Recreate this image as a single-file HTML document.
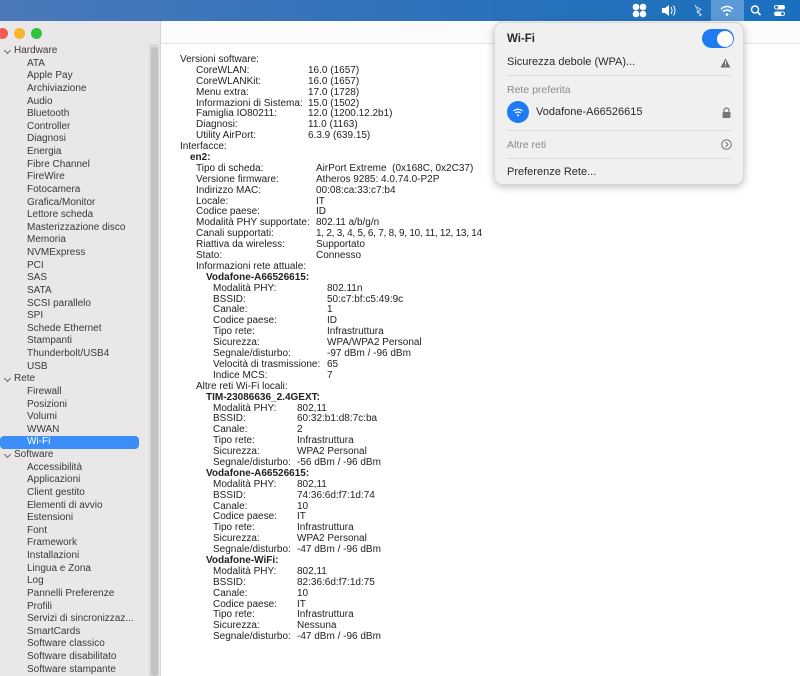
<!DOCTYPE html>
<html><head><meta charset="utf-8"><style>
*{margin:0;padding:0;box-sizing:border-box}
body{width:800px;height:676px;overflow:hidden;position:relative;font-family:"Liberation Sans",sans-serif;background:#fff;color:#222}
#bar{position:absolute;left:0;top:0;width:800px;height:21px;background:linear-gradient(90deg,#4b78ba,#2a72bb 60%,#1a70bd)}
#side{position:absolute;left:0;top:21px;width:161px;height:655px;background:#e9e7e7;border-right:1px solid #d6d6d6}
#scroll{position:absolute;left:149px;top:44px;width:10px;height:632px;background:#d9d7d7}
#thumb{position:absolute;left:151px;top:47px;width:7px;height:629px;background:#c3c1c1;border-radius:4px}
.tl{position:absolute;top:28px;width:11px;height:11px;border-radius:50%}
#sl{position:absolute;left:0;top:45px;font-size:10px;line-height:12.64px;color:#3a3a3a;width:150px}
#sl div{padding-left:27px;height:12.64px;white-space:nowrap}
#sl div.h{padding-left:14px;position:relative}
#sl div.h:before{content:"";position:absolute;left:5px;top:3px;width:4px;height:4px;border-right:1px solid #666;border-bottom:1px solid #666;transform:rotate(45deg)}
#sl div.sel{background:#3b8ef6;color:#fff;border-radius:4px;margin-right:11px}
#hdr{position:absolute;left:161px;top:21px;width:639px;height:23px;background:#fbfbfb;border-bottom:1px solid #e2e2e2}
#ct{position:absolute;left:0;top:55px;font-size:10px;line-height:10.9px;color:#222}
#ct div{position:relative;height:10.9px;white-space:nowrap}
#ct span{position:absolute;top:0}
#ct b{font-weight:bold}
#menu{position:absolute;left:494px;top:22px;width:250px;height:163px;background:#f1f0f0;border-radius:9px;box-shadow:0 2px 8px rgba(0,0,0,.25);border:1px solid #d8d8d8;font-size:11px;color:#2a2a2a}
#menu .t{position:absolute;left:12px}
#menu hr{position:absolute;left:12px;width:225px;border:0;border-top:1px solid #dcdcdc}
</style></head><body>
<div id="bar">
<svg width="800" height="21" style="position:absolute;left:0;top:0">
<g fill="#fff">
<circle cx="636" cy="7" r="3.3"/><circle cx="643" cy="7" r="3.3"/><circle cx="636" cy="14" r="3.3"/><circle cx="643" cy="14" r="3.3"/>
<path d="M662 8h3l4-3v11l-4-3h-3z"/>
</g>
<path d="M671 7q2 3.5 0 7M673.5 5.5q3 5 0 10" stroke="#fff" fill="none" stroke-width="1"/>
<path d="M695 5l6 11M697 7l4 2.5-4 2.5 4 2.5-2 1.5" stroke="#bcd2ea" fill="none" stroke-width="1"/>
<rect x="711" y="0" width="33" height="21" fill="#5b9ad6"/>
<path d="M721 9q6-5 12 0M723 11.5q4-3 8 0" stroke="#fff" fill="none" stroke-width="1.5"/><circle cx="727" cy="14.5" r="1.3" fill="#fff"/>
<circle cx="755" cy="9.5" r="3.5" stroke="#fff" fill="none" stroke-width="1.4"/><path d="M757.5 12l3 3" stroke="#fff" stroke-width="1.6"/>
<rect x="774" y="5" width="11" height="4.5" rx="2.2" fill="#fff"/><rect x="774" y="11.5" width="11" height="4.5" rx="2.2" fill="#fff"/>
<circle cx="776.5" cy="7.2" r="1.5" fill="#2a72bb"/><circle cx="782.5" cy="13.7" r="1.5" fill="#2a72bb"/>
</svg>
</div>
<div id="side"></div>
<div class="tl" style="left:-3px;background:#f25a53"></div>
<div class="tl" style="left:14px;background:#f6b52a"></div>
<div class="tl" style="left:31px;background:#2ec33f"></div>
<div id="scroll"></div><div id="thumb"></div>
<div id="sl">
<div class="h">Hardware</div><div>ATA</div><div>Apple Pay</div><div>Archiviazione</div><div>Audio</div><div>Bluetooth</div><div>Controller</div><div>Diagnosi</div><div>Energia</div><div>Fibre Channel</div><div>FireWire</div><div>Fotocamera</div><div>Grafica/Monitor</div><div>Lettore scheda</div><div>Masterizzazione disco</div><div>Memoria</div><div>NVMExpress</div><div>PCI</div><div>SAS</div><div>SATA</div><div>SCSI parallelo</div><div>SPI</div><div>Schede Ethernet</div><div>Stampanti</div><div>Thunderbolt/USB4</div><div>USB</div>
<div class="h">Rete</div><div>Firewall</div><div>Posizioni</div><div>Volumi</div><div>WWAN</div><div class="sel">Wi-Fi</div>
<div class="h">Software</div><div>Accessibilità</div><div>Applicazioni</div><div>Client gestito</div><div>Elementi di avvio</div><div>Estensioni</div><div>Font</div><div>Framework</div><div>Installazioni</div><div>Lingua e Zona</div><div>Log</div><div>Pannelli Preferenze</div><div>Profili</div><div>Servizi di sincronizzaz...</div><div>SmartCards</div><div>Software classico</div><div>Software disabilitato</div><div>Software stampante</div>
</div>
<div id="hdr"></div>
<div id="ct">
<div><span style="left:180px">Versioni software:</span></div>
<div><span style="left:196px">CoreWLAN:</span><span style="left:308px">16.0 (1657)</span></div>
<div><span style="left:196px">CoreWLANKit:</span><span style="left:308px">16.0 (1657)</span></div>
<div><span style="left:196px">Menu extra:</span><span style="left:308px">17.0 (1728)</span></div>
<div><span style="left:196px">Informazioni di Sistema:</span><span style="left:308px">15.0 (1502)</span></div>
<div><span style="left:196px">Famiglia IO80211:</span><span style="left:308px">12.0 (1200.12.2b1)</span></div>
<div><span style="left:196px">Diagnosi:</span><span style="left:308px">11.0 (1163)</span></div>
<div><span style="left:196px">Utility AirPort:</span><span style="left:308px">6.3.9 (639.15)</span></div>
<div><span style="left:180px">Interfacce:</span></div>
<div><span style="left:190px"><b>en2:</b></span></div>
<div><span style="left:196px">Tipo di scheda:</span><span style="left:316px">AirPort Extreme&nbsp; (0x168C, 0x2C37)</span></div>
<div><span style="left:196px">Versione firmware:</span><span style="left:316px">Atheros 9285: 4.0.74.0-P2P</span></div>
<div><span style="left:196px">Indirizzo MAC:</span><span style="left:316px">00:08:ca:33:c7:b4</span></div>
<div><span style="left:196px">Locale:</span><span style="left:316px">IT</span></div>
<div><span style="left:196px">Codice paese:</span><span style="left:316px">ID</span></div>
<div><span style="left:196px">Modalità PHY supportate:</span><span style="left:316px">802.11 a/b/g/n</span></div>
<div><span style="left:196px">Canali supportati:</span><span style="left:316px;letter-spacing:-0.25px">1, 2, 3, 4, 5, 6, 7, 8, 9, 10, 11, 12, 13, 14</span></div>
<div><span style="left:196px">Riattiva da wireless:</span><span style="left:316px">Supportato</span></div>
<div><span style="left:196px">Stato:</span><span style="left:316px">Connesso</span></div>
<div><span style="left:196px">Informazioni rete attuale:</span></div>
<div><span style="left:206px"><b>Vodafone-A66526615:</b></span></div>
<div><span style="left:213px">Modalità PHY:</span><span style="left:327px">802.11n</span></div>
<div><span style="left:213px">BSSID:</span><span style="left:327px">50:c7:bf:c5:49:9c</span></div>
<div><span style="left:213px">Canale:</span><span style="left:327px">1</span></div>
<div><span style="left:213px">Codice paese:</span><span style="left:327px">ID</span></div>
<div><span style="left:213px">Tipo rete:</span><span style="left:327px">Infrastruttura</span></div>
<div><span style="left:213px">Sicurezza:</span><span style="left:327px">WPA/WPA2 Personal</span></div>
<div><span style="left:213px">Segnale/disturbo:</span><span style="left:327px">-97 dBm / -96 dBm</span></div>
<div><span style="left:213px">Velocità di trasmissione:</span><span style="left:327px">65</span></div>
<div><span style="left:213px">Indice MCS:</span><span style="left:327px">7</span></div>
<div><span style="left:196px">Altre reti Wi-Fi locali:</span></div>
<div><span style="left:206px"><b>TIM-23086636_2.4GEXT:</b></span></div>
<div><span style="left:213px">Modalità PHY:</span><span style="left:297px">802,11</span></div>
<div><span style="left:213px">BSSID:</span><span style="left:297px">60:32:b1:d8:7c:ba</span></div>
<div><span style="left:213px">Canale:</span><span style="left:297px">2</span></div>
<div><span style="left:213px">Tipo rete:</span><span style="left:297px">Infrastruttura</span></div>
<div><span style="left:213px">Sicurezza:</span><span style="left:297px">WPA2 Personal</span></div>
<div><span style="left:213px">Segnale/disturbo:</span><span style="left:297px">-56 dBm / -96 dBm</span></div>
<div><span style="left:206px"><b>Vodafone-A66526615:</b></span></div>
<div><span style="left:213px">Modalità PHY:</span><span style="left:297px">802,11</span></div>
<div><span style="left:213px">BSSID:</span><span style="left:297px">74:36:6d:f7:1d:74</span></div>
<div><span style="left:213px">Canale:</span><span style="left:297px">10</span></div>
<div><span style="left:213px">Codice paese:</span><span style="left:297px">IT</span></div>
<div><span style="left:213px">Tipo rete:</span><span style="left:297px">Infrastruttura</span></div>
<div><span style="left:213px">Sicurezza:</span><span style="left:297px">WPA2 Personal</span></div>
<div><span style="left:213px">Segnale/disturbo:</span><span style="left:297px">-47 dBm / -96 dBm</span></div>
<div><span style="left:206px"><b>Vodafone-WiFi:</b></span></div>
<div><span style="left:213px">Modalità PHY:</span><span style="left:297px">802,11</span></div>
<div><span style="left:213px">BSSID:</span><span style="left:297px">82:36:6d:f7:1d:75</span></div>
<div><span style="left:213px">Canale:</span><span style="left:297px">10</span></div>
<div><span style="left:213px">Codice paese:</span><span style="left:297px">IT</span></div>
<div><span style="left:213px">Tipo rete:</span><span style="left:297px">Infrastruttura</span></div>
<div><span style="left:213px">Sicurezza:</span><span style="left:297px">Nessuna</span></div>
<div><span style="left:213px">Segnale/disturbo:</span><span style="left:297px">-47 dBm / -96 dBm</span></div>
</div>
<div id="menu">
<div class="t" style="top:10px;font-weight:bold;font-size:11.5px">Wi-Fi</div>
<div style="position:absolute;left:207px;top:6px;width:32px;height:19px;border-radius:10px;background:#1f7bf2"><div style="position:absolute;right:1.5px;top:1.5px;width:16px;height:16px;border-radius:50%;background:#fff"></div></div>
<div class="t" style="top:33px">Sicurezza debole (WPA)...</div>
<svg style="position:absolute;left:225px;top:35px" width="11" height="10"><path d="M5.5 0.5L10.5 9.5H0.5Z" fill="#6e6e6e"/><rect x="5" y="3" width="1" height="3.5" fill="#f1f0f0"/><rect x="5" y="7.3" width="1" height="1" fill="#f1f0f0"/></svg>
<hr style="top:52px">
<div class="t" style="top:61px;color:#8a8a8a;font-size:10.5px">Rete preferita</div>
<div style="position:absolute;left:12px;top:78px;width:22px;height:22px;border-radius:50%;background:#1f7bf2"></div>
<svg style="position:absolute;left:12px;top:78px" width="22" height="22"><path d="M6.5 10q4.5-3.5 9 0M8.3 12q2.7-2 5.4 0" stroke="#fff" fill="none" stroke-width="1.3"/><circle cx="11" cy="14.2" r="1" fill="#fff"/></svg>
<div class="t" style="left:41px;top:83px">Vodafone-A66526615</div>
<svg style="position:absolute;left:227px;top:84px" width="9" height="11"><path d="M2 5V3.5a2.5 2.5 0 0 1 5 0V5" stroke="#777" fill="none" stroke-width="1.2"/><rect x="0.5" y="5" width="8" height="6" rx="1" fill="#777"/></svg>
<hr style="top:107px">
<div class="t" style="top:116px;color:#8a8a8a;font-size:10.5px">Altre reti</div>
<svg style="position:absolute;left:226px;top:116px" width="11" height="11"><circle cx="5.5" cy="5.5" r="4.8" stroke="#777" fill="none"/><path d="M4.5 3l2.5 2.5-2.5 2.5" stroke="#777" fill="none"/></svg>
<hr style="top:135px">
<div class="t" style="top:143px">Preferenze Rete...</div>
</div>
</body></html>
